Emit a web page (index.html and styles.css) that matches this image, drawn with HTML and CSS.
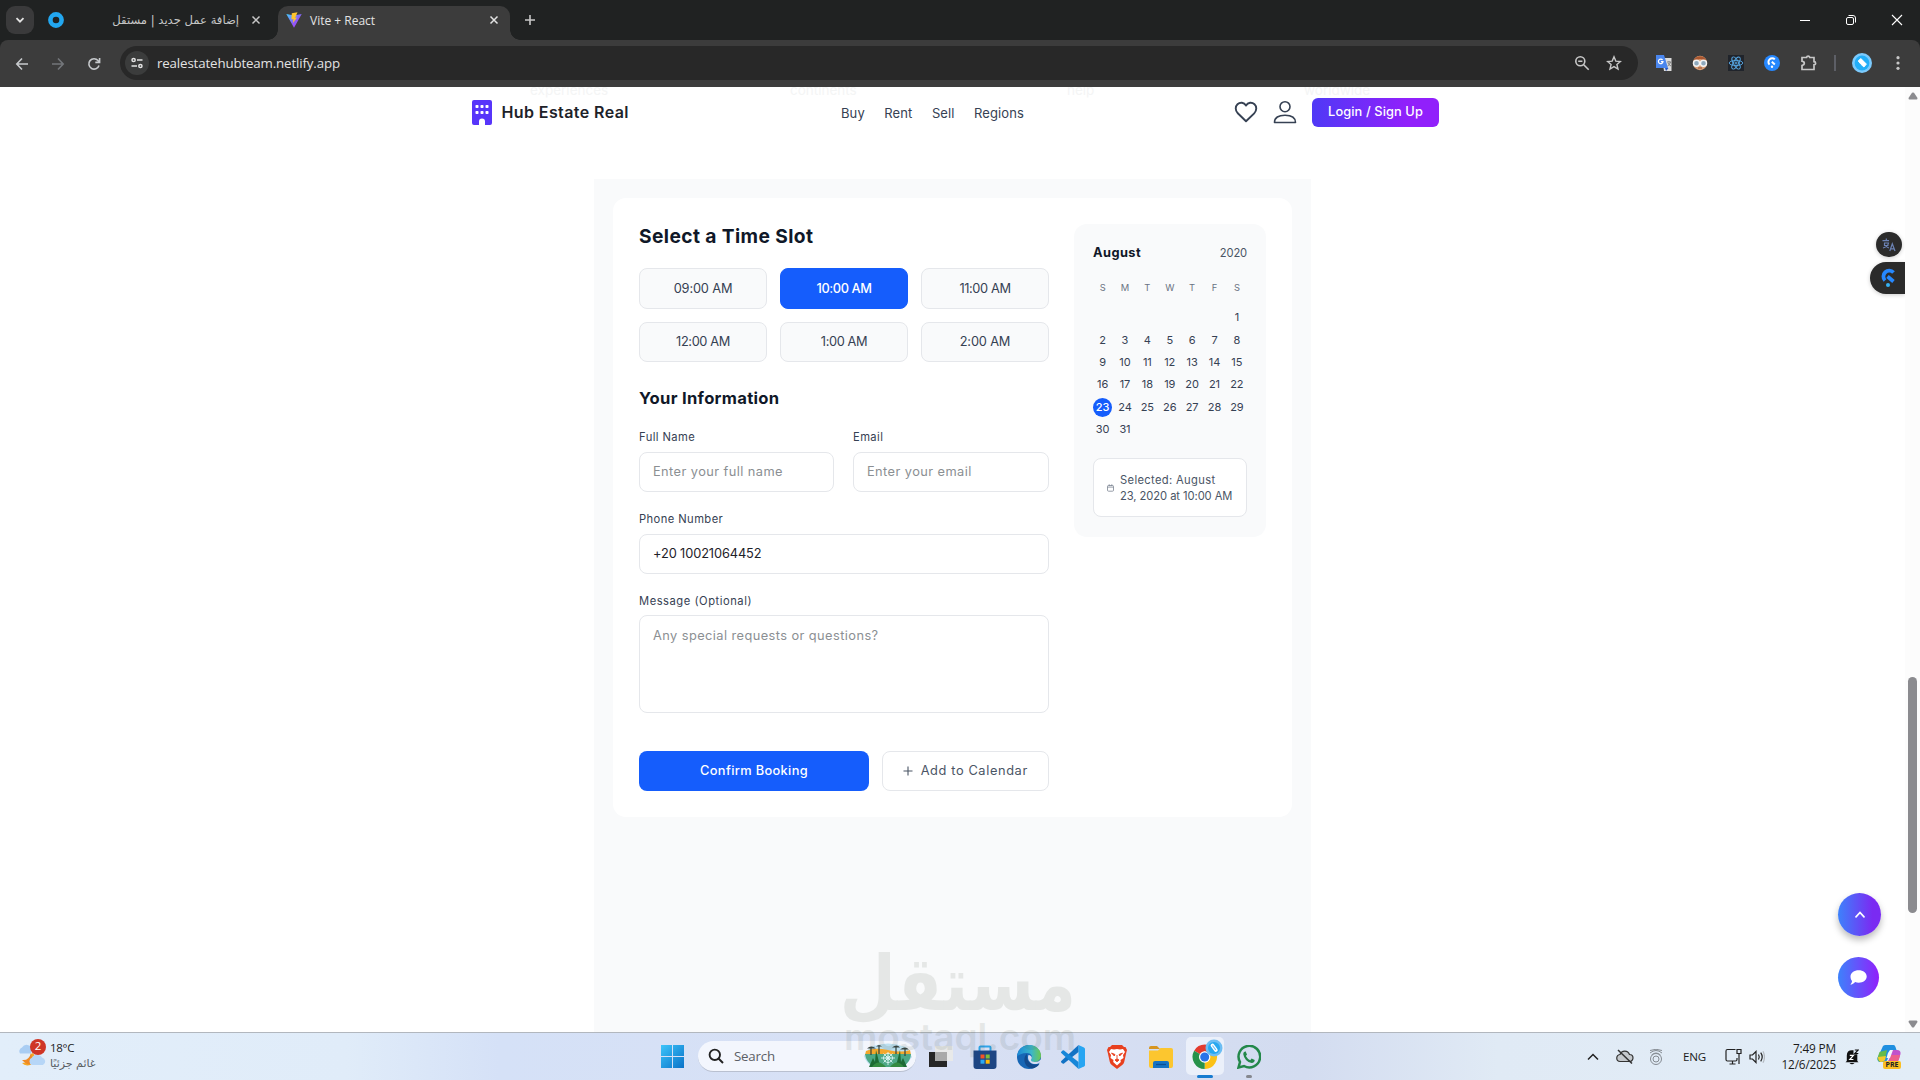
FILE: index.html
```html
<!DOCTYPE html>
<html lang="en">
<head>
<meta charset="utf-8">
<title>Vite + React</title>
<link rel="stylesheet" href="styles.css">
</head>
<body>
<div class="tabs">
  <div class="tab-menu"><svg width="10" height="10" viewBox="0 0 10 10" fill="none" stroke="#e3e3e3" stroke-width="1.8"><path d="M1.500 3.200 5 6.700l3.500-3.500"/></svg></div>
  <div class="tab idle">
    <svg width="16" height="16" viewBox="0 0 16 16" fill="none"><circle cx="8" cy="8" r="5.600" stroke="#22a7f0" stroke-width="4.600"/></svg>
    <span class="tab-title ar" dir="rtl">إضافة عمل جديد | مستقل</span>
    <svg class="x" width="10" height="10" viewBox="0 0 10 10" stroke="#c7c7c7" stroke-width="1.500"><path d="M1.500 1.500l7 7m0-7-7 7"/></svg>
  </div>
  <div class="tab active">
    <svg width="16" height="16" viewBox="0 0 16 16"><defs><linearGradient id="v" x2="1" y2="1"><stop stop-color="#41d1ff"/><stop offset=".55" stop-color="#8b5cf6"/><stop offset="1" stop-color="#bd34fe"/></linearGradient></defs><path d="M.3 2 8 3.400 15.700 2 8 15.700z" fill="url(#v)"/><path d="M11.500.2 5.800 1.300 5.400 7.500l2-.4-.5 3.800 4.200-5.300-2 .3z" fill="#ffc52b"/></svg>
    <span class="tab-title">Vite + React</span>
    <svg class="x" width="10" height="10" viewBox="0 0 10 10" stroke="#e3e3e3" stroke-width="1.500"><path d="M1.500 1.500l7 7m0-7-7 7"/></svg>
  </div>
  <svg class="new-tab" width="12" height="12" viewBox="0 0 12 12" stroke="#c7c7c7" stroke-width="1.600"><path d="M6 1v10M1 6h10"/></svg>
  <div class="win">
    <svg width="12" height="12" viewBox="0 0 12 12" stroke="#fff"><path d="M1 6.500h10"/></svg>
    <svg width="12" height="12" viewBox="0 0 12 12" fill="none" stroke="#fff"><rect x="1.500" y="3.500" width="7" height="7" rx="1.500"/><path d="M3.500 1.500h4.500a2.500 2.500 0 0 1 2.500 2.500v4.500"/></svg>
    <svg width="12" height="12" viewBox="0 0 12 12" stroke="#fff" stroke-width="1.100"><path d="M1 1l10 10M11 1 1 11"/></svg>
  </div>
</div>

<div class="toolbar">
  <div class="nav-btns">
    <svg width="14" height="14" viewBox="0 0 14 14" fill="none" stroke="#c7cacd" stroke-width="1.600"><path d="M13 7H2m5-5.500L1.800 7 7 12.500"/></svg>
    <svg width="14" height="14" viewBox="0 0 14 14" fill="none" stroke="#73767a" stroke-width="1.600"><path d="M1 7h11M7 1.500 12.200 7 7 12.500"/></svg>
    <svg width="14" height="14" viewBox="0 0 14 14" fill="none" stroke="#c7cacd" stroke-width="1.600"><path d="M12 8.500A5.200 5.200 0 1 1 11 3.500l1.200 1.300M12.600 1v4.400H8.300"/></svg>
  </div>
  <div class="omnibox">
    <div class="site"><svg width="12" height="12" viewBox="0 0 12 12" fill="none" stroke="#e3e3e3" stroke-width="1.500"><circle cx="2.600" cy="3" r="1.600"/><path d="M6 3h5.500M.5 9H6"/><circle cx="9.400" cy="9" r="1.600"/></svg></div>
    <span class="url">realestatehubteam.netlify.app</span>
    <svg width="16" height="16" viewBox="0 0 16 16" fill="none" stroke="#c7c7c7" stroke-width="1.600"><circle cx="6.300" cy="6.300" r="4.500"/><path d="M9.700 9.700l5 5M4.200 6.300h4.200"/></svg>
    <svg width="16" height="16" viewBox="0 0 16 16" fill="none" stroke="#c7c7c7" stroke-width="1.400"><path d="M8 1.800l1.800 4.300 4.600.4-3.500 3 1.100 4.500L8 11.600 4 14l1.100-4.500-3.500-3 4.600-.4z"/></svg>
  </div>
  <div class="exts">
    <svg width="16" height="16" viewBox="0 0 16 16"><path d="M6 3h9.500v13H8z" fill="#dcdcdc"/><path d="M0 0h8l4 13H0z" fill="#4a86ee"/><path d="M9 13h3.500L10 16z" fill="#2557c4"/><path d="M6.600 5A2.300 2.300 0 1 0 7 6.700H4.900" fill="none" stroke="#fff" stroke-width="1.200"/><path d="M11 7h4m-2-1v1m1.500 0q-.7 3-3 4m.5-3q.8 2 3 3" fill="none" stroke="#777" stroke-width=".9"/></svg>
    <svg width="16" height="16" viewBox="0 0 16 16"><circle cx="8" cy="8" r="7.200" fill="#dca078"/><path d="M1.500 6A6.800 6.800 0 0 1 14.500 6L8 4z" fill="#a9562f"/><circle cx="4.500" cy="8.300" r="3" fill="#8fa9bd" stroke="#f4f4f4" stroke-width="1.400"/><circle cx="11.500" cy="8.300" r="3" fill="#8fa9bd" stroke="#f4f4f4" stroke-width="1.400"/><path d="M6 13h4" stroke="#8b4c32"/></svg>
    <svg width="16" height="16" viewBox="0 0 16 16" fill="none" stroke="#58a9e6" stroke-width=".9"><path d="M0 0h16v16H0z" fill="#20242b" stroke="none"/><ellipse cx="8" cy="8" rx="6.800" ry="2.600"/><ellipse cx="8" cy="8" rx="6.800" ry="2.600" transform="rotate(60 8 8)"/><ellipse cx="8" cy="8" rx="6.800" ry="2.600" transform="rotate(120 8 8)"/><circle cx="8" cy="8" r="1"/></svg>
    <svg width="16" height="16" viewBox="0 0 16 16" fill="none"><circle cx="8" cy="8" r="8" fill="#2688ff"/><path d="M10.800 4.400A3.700 3.700 0 1 0 5.500 9.600M7.800 6.800l3 2.700" stroke="#fff" stroke-width="2"/><circle cx="8" cy="11.800" r="1.200" fill="#fff"/></svg>
    <svg width="18" height="18" viewBox="0 0 18 18" fill="none" stroke="#c7c7c7" stroke-width="1.700"><path d="M2 3.500h4.500a1.700 1.700 0 0 1 3.300 0H14v4.200a1.600 1.600 0 0 1 0 3.200v4.600H2v-4q2.300-.5 2.300-2.200T2 7.200z"/></svg>
    <i class="sep"></i>
    <svg width="20" height="20" viewBox="0 0 20 20"><circle cx="10" cy="10" r="10" fill="#7ccafc"/><circle cx="10" cy="10" r="7.400" fill="#22aef8"/><path d="M6.300 8l2.500-2.500 2.600 2.600 3 3-2.500 2.900-3-2.800z" fill="#fff" stroke="#fff" stroke-linejoin="round"/></svg>
    <svg width="4" height="16" viewBox="0 0 4 16" fill="#c7c7c7"><circle cx="2" cy="2.700" r="1.600"/><circle cx="2" cy="8" r="1.600"/><circle cx="2" cy="13.300" r="1.600"/></svg>
  </div>
</div>

<div class="viewport">
  <div class="page">
    <header class="header">
      <div class="ghost" aria-hidden="true"><span class="g1">experiences</span><span class="g2">continents</span><span class="g3">help</span><span class="g4">worldwide</span></div>
      <div class="brand">
        <svg width="20" height="25" viewBox="0 0 20 25"><path d="M2 0h16a2 2 0 0 1 2 2v21a2 2 0 0 1-2 2h-5v-3.500a3 3 0 0 0-6 0V25H2a2 2 0 0 1-2-2V2a2 2 0 0 1 2-2z" fill="#5735fa"/><g fill="#fff"><rect x="3.500" y="5" width="3" height="3" rx=".8"/><rect x="8.500" y="5" width="3" height="3" rx=".8"/><rect x="13.500" y="5" width="3" height="3" rx=".8"/><rect x="3.500" y="11" width="3" height="3" rx=".8"/><rect x="8.500" y="11" width="3" height="3" rx=".8"/><rect x="13.500" y="11" width="3" height="3" rx=".8"/></g></svg>
        <span>Hub Estate Real</span>
      </div>
      <nav class="links"><a>Buy</a><a>Rent</a><a>Sell</a><a>Regions</a></nav>
      <div class="account">
        <svg width="24" height="22" viewBox="0 0 24 22" fill="none" stroke="#364153" stroke-width="1.900" stroke-linejoin="round"><path d="M12 20.300 3.800 12.300C1 9.500 1.200 5.500 3.500 3.300 6 1 10 1.200 12 4.600 14 1.200 18 1 20.500 3.300c2.300 2.200 2.500 6.200-.3 9z"/></svg>
        <svg width="24" height="24" viewBox="0 0 24 24" fill="none" stroke="#364153" stroke-width="1.600" stroke-linejoin="round"><circle cx="12" cy="6.700" r="5"/><path d="M1.500 22.500C1.500 17.500 5.500 15.200 12 15.200s10.500 2.300 10.500 7.300z"/></svg>
        <button class="login">Login / Sign Up</button>
      </div>
    </header>

    <section class="booking">
      <div class="card">
        <div class="form">
          <h2>Select a Time Slot</h2>
          <div class="slots">
            <button>09:00 AM</button><button class="on">10:00 AM</button><button class="one">11:00 AM</button>
            <button class="one">12:00 AM</button><button class="one">1:00 AM</button><button>2:00 AM</button>
          </div>
          <h3>Your Information</h3>
          <div class="row">
            <div class="field"><label>Full Name</label><div class="input">Enter your full name</div></div>
            <div class="field"><label>Email</label><div class="input">Enter your email</div></div>
          </div>
          <div class="field"><label>Phone Number</label><div class="input filled">+20 10021064452</div></div>
          <div class="field"><label class="wide">Message (Optional)</label><div class="input area">Any special requests or questions?</div></div>
          <div class="actions">
            <button class="confirm">Confirm Booking</button>
            <button class="add"><svg width="10" height="10" viewBox="0 0 10 10" stroke="#4a5565" stroke-width="1.100"><path d="M5 .5v9M.5 5h9"/></svg>Add to Calendar</button>
          </div>
        </div>
        <aside class="calendar">
          <div class="month"><b>August</b><span>2020</span></div>
          <div class="grid week"><span>S</span><span>M</span><span>T</span><span>W</span><span>T</span><span>F</span><span>S</span></div>
          <div class="grid days">
            <span class="first">1</span>
            <span>2</span><span>3</span><span>4</span><span>5</span><span>6</span><span>7</span><span>8</span>
            <span>9</span><span>10</span><span>11</span><span>12</span><span>13</span><span>14</span><span>15</span>
            <span>16</span><span>17</span><span>18</span><span>19</span><span>20</span><span>21</span><span>22</span>
            <span class="today">23</span><span>24</span><span>25</span><span>26</span><span>27</span><span>28</span><span>29</span>
            <span>30</span><span>31</span>
          </div>
          <div class="selected">
            <svg width="7" height="8" viewBox="0 0 7 8" fill="none" stroke="#7b8492" stroke-width=".8"><rect x=".5" y="1.500" width="6" height="5.700" rx="1"/><path d="M.5 3.100h6M2.200.3v1.500M4.800.3v1.500"/></svg>
            <p><span class="l1">Selected: August</span><br><span class="l2">23, 2020 at 10:00 AM</span></p>
          </div>
        </aside>
      </div>
    </section>

    <div class="side-tools">
      <div class="translate"><svg width="14" height="14" viewBox="0 0 14 14" fill="none" stroke="#6c83b5" stroke-width="1.200"><path d="M.5 2.700h6.500M4.300.5v2.200M2 5h4.500q-.5 3.500-5.500 5M2.500 5v2.500h4M3.500 7.500Q5 9.500 7 10M7.800 13l2.500-7.300L13 13M8.600 10.800h3.700"/></svg></div>
      <div class="assist"><svg width="16" height="20" viewBox="0 0 16 20" fill="none" stroke="#2688ff" stroke-width="3.800"><path d="M13.500 4.500A5.500 5.500 0 1 0 5 12.500"/><path d="M7.500 8.500l6 5"/><circle cx="8" cy="17" r="2" fill="#35b1f5" stroke="none"/></svg></div>
    </div>
    <div class="fabs">
      <div class="fab up"><svg width="10" height="7" viewBox="0 0 10 7" fill="none" stroke="#fff" stroke-width="1.700" stroke-linecap="round"><path d="M1 5.800 5 1.500l4 4.300"/></svg></div>
      <div class="fab chat"><svg width="17" height="15" viewBox="0 0 17 15" fill="#fff"><path d="M8.700.3c4.500 0 8 2.700 8 6.200s-3.500 6.200-8 6.200c-1.300 0-2.500-.2-3.600-.7C4 13.500 2.200 14.600.3 14.600c1-1 1.600-2.200 1.700-3.600C1 9.700.5 8.200.5 6.500.5 3 4.200.3 8.700.3z"/></svg></div>
    </div>
  </div>
  <div class="scrollbar">
    <svg width="10" height="8" viewBox="0 0 10 8" fill="#8b8b8f"><path d="M4 .8Q5 0 6 .8L9.500 6Q9.500 7.500 8.500 7.500h-7Q.5 7.500.5 6z"/></svg>
    <i></i>
    <svg width="10" height="8" viewBox="0 0 10 8" fill="#8b8b8f"><path d="M4 7.200Q5 8 6 7.200L9.500 2Q9.500.5 8.500.5h-7Q.5.5.5 2z"/></svg>
  </div>
</div>

<div class="taskbar">
  <div class="weather">
    <svg width="28" height="30" viewBox="0 0 28 30"><path d="M2 14.500a4 4 0 0 1 2-6 5.500 5.500 0 0 1 10 1.500l-1 4.500z" fill="#a9cdf3"/><path d="M15 14a7 7 0 1 1-11 10q7 0 9-9z" fill="#f4a825"/><path d="M4 21q7 1 9-7l2 9q-3 6-11-2z" fill="#f08a24"/><path d="M14 26a4 4 0 0 1 0-7.500 6 6 0 0 1 10 0 4 4 0 0 1 1 7.500z" fill="#b6d6f7"/><circle cx="20" cy="8" r="8" fill="#cf3526"/></svg>
    <span class="badge">2</span>
    <div class="forecast"><span>18°C</span><span class="cond" dir="rtl">غائم جزئيًا</span></div>
  </div>
  <svg class="start" width="23" height="23" viewBox="0 0 23 23"><defs><linearGradient id="w" x2="1" y2="1"><stop stop-color="#3cc4fa"/><stop offset="1" stop-color="#0a72c8"/></linearGradient></defs><path d="M0 0h11v11H0zM12 0h11v11H12zM0 12h11v11H0zM12 12h11v11H12z" fill="url(#w)"/></svg>
  <div class="search">
    <svg width="16" height="16" viewBox="0 0 16 16" fill="none" stroke="#222" stroke-width="1.900"><circle cx="6.800" cy="6.800" r="5.200"/><path d="M10.500 10.500l4.500 4.500"/></svg>
    <span>Search</span>
    <svg width="48" height="26" viewBox="0 0 48 26"><path d="M6 4q18-7 36 0l6 10q-6 8-10 10H9Q2 20 0 13z" fill="#bcdff0"/><path d="M2 8q8-4 22-1t22 0l1 5H1z" fill="#f4a82d"/><path d="M1 11h46q0 7-8 13H10Q2 19 1 11z" fill="#4da886"/><path d="M5 24 9 15l2 4 1-12 3 12 3 5zM43 24l-4-9-2 4-1-12-3 12-3 5z" fill="#1d6b35"/><path d="M8 24q6-9 14 0zM26 24q7-9 14 0z" fill="#348b42"/><path d="M3 5.500q4-4 9 0zM12 3.500q3-3 6 0zM28 4.500q5-4 8 0zM36 6.500q5-4 9 0z" fill="#3d4644"/><path d="M7 4v8M41 5v8M15 3v8M32 3v8" stroke="#33413c" stroke-width="1.200"/><g stroke="#e7fbff" stroke-width=".8" fill="none"><path d="M24 9v13M17 15h14M19.500 10.500l9 9M28.500 10.500l-9 9"/><circle cx="24" cy="15" r="4.500"/><circle cx="24" cy="15" r="2"/></g></svg>
  </div>
  <div class="apps">
    <div><svg width="24" height="24" viewBox="0 0 24 24"><path d="M0 7h18v15H0z" fill="#262626"/><path d="M6 1h18v15H6z" fill="#e9e9e7" opacity=".92"/><path d="M6 7h12v9H6z" fill="#a9a9a9"/></svg></div>
    <div><svg width="24" height="24" viewBox="0 0 24 24"><path d="M6.500 6V2.500q0-1 1-1h9q1 0 1 1V6" fill="none" stroke="#2da4ea" stroke-width="2"/><path d="M.5 5.500h23V21q0 3-3 3h-17q-3 0-3-3z" fill="#1d4583"/><path d="M7.500 9.500h4v4h-4z" fill="#f35325"/><path d="M12.700 9.500h4v4h-4z" fill="#81bc36"/><path d="M7.500 14.700h4v4h-4z" fill="#2aa9f3"/><path d="M12.700 14.700h4v4h-4z" fill="#ffba08"/></svg></div>
    <div><svg width="24" height="24" viewBox="0 0 24 24"><defs><linearGradient id="e" x2="1"><stop stop-color="#1b87d6"/><stop offset=".6" stop-color="#3cb6c9"/><stop offset="1" stop-color="#6cc94f"/></linearGradient></defs><circle cx="12" cy="12" r="12" fill="#1766b5"/><path d="M0 11.500C.5 5 5.500 0 12 0c7 0 12 5 12 10.500 0 4-3 6.500-6.500 6.500-3 0-4.500-1.200-3-3 1.700-3-1-6-4.500-6-5 0-8.500 2-10 3.500z" fill="url(#e)"/><path d="M10 9c-4 2-4 13 5 14.500 3-.3 6-2 7.500-4.800-3 1.500-7 1.500-10-1.200-2.300-2-3-5.500-2.500-8.500z" fill="#134a8c"/><path d="M11.500 10c-1.500 3.500.5 8 5.500 9 2 .3 4.500-.4 6-1.500L24.500 19V14q-4 4-8 2.800c-2.500-.5-3-1.500-2-2.800 1-1.700-.5-4-3-4z" fill="#d7def2"/></svg></div>
    <div><svg width="24" height="24" viewBox="0 0 24 24"><path d="M17.500 0 23 2.500q1 .5 1 1.500v16q0 1-1 1.500L17.500 24z" fill="#27a5f2"/><path d="M17.500 0v7L3 18.500q-.7.500-1.400 0L.3 17.300q-.6-.7 0-1.400z" fill="#1272c4"/><path d="M17.500 24v-7L3 5.500q-.7-.5-1.400 0L.3 6.700q-.6.700 0 1.400z" fill="#1787d9"/></svg></div>
    <div><svg width="20" height="24" viewBox="0 0 20 24"><path d="M5 0h10l2 2h1.500L20 5l-.8 3-2 9q-.5 2-2 3L10 24l-5.200-4q-1.500-1-2-3l-2-9L0 5l1.500-3H3z" fill="#e8401f"/><path d="M4 4l3 .5L10 4l3 .5 3-.5 2 3-2 3 .5 3-3 2 .3 2L10 20.500 6.200 17l.3-2-3-2L4 10 2 7z" fill="#fff"/><path d="M4.500 8 8 9.500 7.300 11zM15.500 8 12 9.500l.7 1.500zM10 10v3.500M8 15l2-1.300L12 15l-2 1.800z" fill="#e8401f" stroke="#e8401f" stroke-width=".9"/></svg></div>
    <div><svg width="24" height="22" viewBox="0 0 24 22"><path d="M0 2q0-2 2-2h6l3 3H0z" fill="#d79520"/><path d="M0 4.500h9L11.500 2H22q2 0 2 2v16q0 2-2 2H2q-2 0-2-2z" fill="#fcc62f"/><path d="M4 22v-5q0-2 2-2h12q2 0 2 2v5z" fill="#1673c2"/><path d="M7 18.500h10" stroke="#0d4f93" stroke-width="1.300"/></svg></div>
    <div class="current"><svg width="32" height="32" viewBox="0 0 32 32"><g fill="none" stroke-width="7"><path d="M6.200 13.500A8.700 8.700 0 0 1 21.300 13.500" stroke="#e33b2e"/><path d="M21.500 14A8.500 8.500 0 0 1 13.700 26.500" stroke="#fbc116"/><path d="M13.700 26.500A8.700 8.700 0 0 1 6.200 13.500" stroke="#27924a"/></g><circle cx="13.700" cy="18" r="5.700" fill="#fff"/><circle cx="13.700" cy="18" r="4.500" fill="#2a73e8"/><circle cx="23" cy="9" r="8.500" fill="#6cbdf3"/><circle cx="23" cy="9" r="6" fill="#27a8f0"/><path d="M21.500 6.500l3.300 4.500" stroke="#fff" stroke-width="3.800" stroke-linecap="round"/><path d="M21.500 6.500l3.300 4.500" stroke="#6cbdf3" stroke-width="1.200"/></svg></div>
    <div class="running"><svg width="24" height="24" viewBox="0 0 24 24"><path d="M1.500 22.500 3 17A10.800 10.800 0 1 1 7 21z" fill="none" stroke="#23884a" stroke-width="2.500"/><path d="M8.500 6.200 10 9.500 8.900 11q1.600 3 4.300 4.200l1.400-1.700 3.100 1.500q0 2.700-3 3Q7.500 16.500 6.200 9q0-2.300 2.300-2.800z" fill="#23884a"/></svg></div>
  </div>
  <div class="tray">
    <svg width="12" height="8" viewBox="0 0 12 8" fill="none" stroke="#222" stroke-width="1.500"><path d="M1 6.500 6 1.500l5 5"/></svg>
    <svg class="cloud" width="18" height="15" viewBox="0 0 18 15" fill="none" stroke="#333" stroke-width="1.200"><path d="M4.500 12.500a3.500 3.500 0 0 1-.5-7 5 5 0 0 1 9.500 0 3.500 3.500 0 0 1 0 7z" fill="#c4c8cc"/><path d="M2 1l14 13.500" stroke-width="1.500"/></svg>
    <svg class="rings" width="14" height="16" viewBox="0 0 14 16" fill="none" stroke="#858b92" stroke-width="1"><circle cx="7" cy="10" r="5.500"/><circle cx="7" cy="10" r="3"/><path d="M1 4q6-5 12 0M2.500 6q4.500-4 9 0M1 1.500q6-2.500 12 0"/></svg>
    <span class="lang">ENG</span>
    <svg class="net" width="17" height="17" viewBox="0 0 17 17" fill="none" stroke="#222" stroke-width="1.200"><path d="M10.500 1.500H2.500q-1.500 0-1.500 1.500v8.500q0 1.500 1.500 1.500h8q1.500 0 1.500-1.500V10M7.500 13v3M4.500 16h6M12 1.500h4v4h-4zM14 5.500V16"/></svg>
    <svg class="vol" width="16" height="14" viewBox="0 0 16 14" fill="none" stroke="#222" stroke-width="1.200"><path d="M1 5v4h2.500L7 12.500v-11L3.500 5zM9.500 4.500q1.500 2.500 0 5M11.700 2.700q3 4.300 0 8.600"/><path d="M14 1.200q3 5.800 0 11.600" stroke="#b4bac0"/></svg>
    <div class="clock"><span>7:49 PM</span><span>12/6/2025</span></div>
    <div class="bell"><svg width="14" height="16" viewBox="0 0 14 16"><path d="M1.800 12V6.500Q1.800 1.200 7 1.200h1.500v4h3.800V12l1.200 1.200H.5z" fill="#111"/><path d="M4.500 14h5q-2.500 2.500-5 0z" fill="#111"/><path d="M4.800 6.300h3.600L4.800 10.500h3.600" fill="none" stroke="#fff" stroke-width="1.200"/><path d="M9.800 1h3.400L9.800 4.500h3.500" fill="none" stroke="#111" stroke-width="1.100"/></svg></div>
    <div class="copilot"><svg width="24" height="18" viewBox="0 0 24 18"><path d="M6 1q1-1 2.500-1h8q1.500 0 2 2l1 3h-4q-2 0-3 3l-1.500 5q-1 4-4 4H3.500Q0 17 .5 13z" fill="#1f8fe0"/><path d="M2.500 7 10 5l-2 9q-1 3-4 3-3.500 0-3.500-4z" fill="#66bb4b"/><path d="M1 12l8-1-1 4q-1 2-4 2-2.500-.5-3-5z" fill="#f5c92e"/><path d="M15 5h5q4 0 3.500 4L22 14q-.7 3-3.500 3H10q2-1 3-5z" fill="#c052cc"/><path d="M14 10h9l-1 4q-1 3-4 3h-6z" fill="#ec5f8d"/><path d="M13 5h3l-3 8H9.500l1.500-5z" fill="#f3f6fb"/></svg><span>PRE</span></div>
  </div>
</div>
<div class="watermark"><div class="wm-ar" dir="rtl">مستقل</div><div class="wm-en">mostaql.com</div></div>
</body>
</html>
```
FILE: styles.css
```css
* { box-sizing: border-box; }
html, body { margin: 0; height: 1080px; overflow: hidden; }
body { position: relative; display: flex; flex-direction: column; background: #202222; font-family: Inter, "Noto Sans", sans-serif; }
svg { flex: none; display: block; }
h2, h3, p { margin: 0; }
button { font: inherit; padding: 0; border: 0; }

/* Browser chrome */
.tabs, .toolbar, .taskbar { font-family: "Open Sans", "DejaVu Sans", sans-serif; }
.tabs { height: 40px; display: flex; align-items: center; background: #202222; }
.tab-menu { width: 28px; height: 28px; margin-left: 6px; border-radius: 9px; background: #3a3a3b; display: grid; place-items: center; }
.tab { display: flex; align-items: center; }
.tab.idle { width: 244px; padding: 0 17px 0 14px; }
.tab-title { font-size: 12px; color: #e3e3e3; white-space: nowrap; }
.tab-title.ar { font: 11.6px "DejaVu Sans", sans-serif; color: #c7c7c7; margin-left: auto; }
.tab .x { margin-left: auto; }
.tab.idle .x { margin-left: 12px; }
.tab.active { align-self: flex-end; width: 232px; height: 34px; padding: 0 11px 6px 8px; border-radius: 10px 10px 0 0; background: #3c3c3c; position: relative; }
.tab.active::before, .tab.active::after { content: ""; position: absolute; bottom: 0; width: 10px; height: 10px; }
.tab.active::before { left: -10px; background: radial-gradient(circle at 0 0, transparent 9.5px, #3c3c3c 10px); }
.tab.active::after { right: -10px; background: radial-gradient(circle at 100% 0, transparent 9.5px, #3c3c3c 10px); }
.tab.active .tab-title { margin-left: 8px; }
.new-tab { margin-left: 14px; }
.win { margin: 0 17px 0 auto; display: flex; gap: 34px; }
.toolbar { height: 47px; display: flex; align-items: center; background: #3c3c3c; border-radius: 8px 8px 0 0; }
.nav-btns { display: flex; gap: 22px; width: 120px; padding-left: 15px; }
.omnibox { width: 1518px; height: 34px; margin-top: -1px; border-radius: 17px; background: #282828; display: flex; align-items: center; gap: 16px; padding: 0 16px 0 5px; }
.site { width: 24px; height: 24px; border-radius: 12px; background: #3b3c3c; display: grid; place-items: center; margin-right: -8px; }
.url { flex: 1; font-size: 13.3px; letter-spacing: -.14px; color: #e3e3e3; }
.exts { display: flex; align-items: center; gap: 20px; padding-left: 18px; margin-top: -1px; }
.exts svg:nth-child(5) { margin-right: -3px; }
.sep { width: 2px; height: 16px; background: #5d5f66; margin-left: -1px; }
.sep + svg { margin-left: -4px; }
.exts svg:last-child { margin-left: 4px; }

/* Page */
.viewport { height: 945px; display: flex; background: #fff; }
.page { flex: 1; position: relative; overflow: hidden; display: flex; flex-direction: column; align-items: center; }
.header { position: relative; width: 967px; height: 51px; margin-left: 6px; flex: none; display: flex; align-items: center; color: #364153; }
.ghost { position: absolute; inset: 0; overflow: hidden; color: #f4f5f5; font-size: 13.500px; line-height: 14px; }
.ghost span { position: absolute; top: -4px; }
.g1 { left: 58px; } .g2 { left: 318px; } .g3 { left: 595px; } .g4 { left: 832px; }
.brand { width: 369px; display: flex; align-items: center; gap: 9.500px; font-weight: 600; font-size: 16px; letter-spacing: .4px; color: #1e2229; }
.brand span { margin-top: -2px; }
.links { display: flex; gap: 19.500px; font-size: 13px; letter-spacing: .1px; color: #364153; }
.account { margin-left: auto; display: flex; align-items: center; gap: 15px; }
.account svg { margin-top: -1px; }
.login { width: 127px; height: 29px; border-radius: 6px; background: linear-gradient(90deg, #4f39f6, #9120fb 75%); color: #fff; font-size: 12.8px; font-weight: 500; letter-spacing: .11px; padding-bottom: 2px; }

.booking { flex: none; width: 717px; height: 870px; margin-top: 41px; padding: 19px; background: #f9fafb; }
.card { height: 619px; padding: 26px; border-radius: 13px; background: #fff; display: flex; gap: 25px; }
.form { width: 410px; display: flex; flex-direction: column; }
h2 { height: 25px; margin-bottom: 19px; font: 700 19.2px/25px Inter, sans-serif; letter-spacing: .4px; color: #101828; }
.slots { display: grid; grid-template-columns: repeat(3, 1fr); grid-template-rows: 41px 40px; gap: 13px; font-size: 12.8px; }
.slots button { border: 1px solid #e5e7eb; border-radius: 8px; background: #f9fafb; color: #364153; letter-spacing: -.15px; padding-bottom: 1px; }
.slots .one { letter-spacing: -.38px; }
.slots .on { border-color: #155dfc; background: #155dfc; color: #fff; font-weight: 500; letter-spacing: -.39px; }
h3 { margin: 25px 0 19px; font: 700 16.6px/23px Inter, sans-serif; letter-spacing: .3px; color: #101828; }
.row { display: grid; grid-template-columns: 195px 196px; gap: 19px; }
.field { margin-bottom: 19px; }
label { display: block; font-size: 11.2px; line-height: 17px; letter-spacing: .42px; color: #364153; margin-bottom: 6px; }
label.wide { letter-spacing: .53px; margin-bottom: 5px; }
.input { height: 40px; border: 1px solid #e5e7eb; border-radius: 8px; padding: 0 13px; font-size: 12.8px; line-height: 38px; letter-spacing: .43px; color: #8b8f93; }
.input.filled { color: #1e2229; letter-spacing: -.1px; }
.input.area { height: 98px; line-height: 39px; }
.actions { display: flex; gap: 13px; margin-top: 19px; font-size: 12.8px; }
.actions button { height: 40px; border-radius: 8px; padding-bottom: 1px; }
.confirm { width: 230px; background: #155dfc; color: #fff; font-weight: 500; letter-spacing: .35px; }
.add { width: 167px; border: 1px solid #e5e7eb; background: #fff; color: #4a5565; display: flex; align-items: center; justify-content: center; gap: 7.500px; letter-spacing: .62px; }
.calendar { width: 192px; height: 313px; border-radius: 13px; background: #f9fafb; padding: 19px; }
.month { height: 19px; display: flex; justify-content: space-between; align-items: center; font-size: 11.2px; letter-spacing: -.15px; color: #4a5565; }
.month b { font-weight: 700; font-size: 12.8px; letter-spacing: .45px; color: #101828; }
.grid { display: grid; grid-template-columns: repeat(7, 19.2px); grid-auto-rows: 19.2px; gap: 3.2px; place-items: center; font-size: 11px; color: #364153; }
.week { margin: 16px 0 11px; font-size: 9.4px; color: #6a7282; }
.first { grid-column: 7; }
.grid span { width: 19.2px; line-height: 19.2px; text-align: center; letter-spacing: -.1px; }
.grid .today { border-radius: 50%; background: #155dfc; color: #fff; font-weight: 500; }
.selected { width: 154px; height: 59px; margin-top: 18.500px; border: 1px solid #e5e7eb; border-radius: 8px; background: #fff; padding: 1px 0 0 13px; display: flex; align-items: center; gap: 6px; font-size: 11.2px; line-height: 16px; color: #4a5565; white-space: nowrap; }
.l1 { letter-spacing: .34px; } .l2 { letter-spacing: -.07px; }

/* Floating controls */
.side-tools { position: absolute; right: 0; top: 145px; display: flex; flex-direction: column; align-items: flex-end; gap: 5px; }
.translate { width: 26px; height: 25px; margin-right: 3px; border-radius: 13px; background: #2b2b2b; display: grid; place-items: center; box-shadow: 0 1px 4px #0003; }
.assist { width: 35px; height: 32px; border-radius: 16px 0 0 16px; background: #2b2b2b; display: grid; place-items: center; box-shadow: 0 1px 4px #0003; }
.fabs { position: absolute; right: 24px; top: 806px; display: flex; flex-direction: column; gap: 21px; }
.fab { width: 43px; height: 43px; border-radius: 50%; display: grid; place-items: center; background: linear-gradient(90deg, #3d82fb, #7a2bf2 80%); }
.up { box-shadow: 0 4px 7px #0004; }
.chat { width: 41px; height: 41px; background: linear-gradient(90deg, #3d82fb, #9120fb); }
.scrollbar { width: 15px; background: #fcfcfc; display: flex; flex-direction: column; align-items: center; padding: 5px 0 4px; }
.scrollbar i { width: 9px; height: 236px; border-radius: 5px; background: #8b8b8f; margin: 577px 0 auto; }

/* Taskbar */
.taskbar { height: 48px; border-top: 1px solid #b2b7be; background: linear-gradient(90deg, #e2eefa 0, #e0ecf9 18%, #d5e1f7 26%, #d8e0f4 50%, #d3dcf0 68%, #e0eaf5 78%, #e2edf7 100%); display: flex; align-items: center; color: #1c1c1c; }
.weather { width: 661px; height: 40px; padding-left: 18px; display: flex; align-items: center; gap: 4px; position: relative; }
.weather > svg { margin-top: -6px; }
.badge { position: absolute; left: 34px; top: 2px; width: 8px; text-align: center; font-size: 11.500px; line-height: 14px; color: #fff; }
.forecast { display: flex; flex-direction: column; font-size: 11.500px; line-height: 16px; letter-spacing: -.3px; margin-top: -2px; }
.forecast .cond { font: 11px/16px "DejaVu Sans", sans-serif; letter-spacing: 0; color: #565b61; }
.start { margin-right: 14px; }
.search { width: 218px; height: 31px; border-radius: 16px; background: #f3f6fd; border-bottom: 1px solid #b9c0d0; display: flex; align-items: center; padding: 0 4px 0 10px; font-size: 13.3px; letter-spacing: -.2px; color: #5c5f66; }
.search span { flex: 1; margin-left: 10px; }
.apps { display: flex; margin-left: 2.500px; }
.apps div { width: 44px; height: 47px; display: grid; place-items: center; position: relative; }
.apps .current::before { content: ""; position: absolute; left: 3px; top: 4px; width: 38px; height: 38px; border-radius: 5px; background: #ebf0fa; }
.apps .current svg { position: relative; top: -2px; left: 2px; }
.apps .current::after, .running::after { content: ""; position: absolute; left: 14px; bottom: 2px; width: 16px; height: 3px; border-radius: 2px; background: #157bd0; }
.apps .running::after { left: 19px; width: 6px; background: #85888f; }
.tray { margin-left: auto; display: flex; align-items: center; padding-right: 19px; }
.cloud { margin-left: 17px; } .rings { margin-left: 15px; }
.lang { width: 23px; margin-left: 20px; font-size: 11.6px; letter-spacing: -.2px; }
.net { margin-left: 19px; } .vol { margin-left: 7px; }
.clock { width: 60px; margin-left: 11px; display: flex; flex-direction: column; align-items: flex-end; font-size: 11.8px; line-height: 16px; letter-spacing: -.15px; margin-top: -2px; }
.bell { margin-left: 9px; }
.copilot { margin-left: 18px; width: 24px; height: 24px; position: relative; }
.copilot span { position: absolute; left: 6px; bottom: 0; width: 18px; height: 8px; border-radius: 2px; background: #fbbf24; color: #222; font-size: 7px; font-weight: 700; line-height: 8px; text-align: center; }

/* Watermark laid over the whole screen */
.watermark { position: absolute; left: 840px; top: 944px; width: 240px; height: 125px; opacity: .1; color: #3c4b37; pointer-events: none; }
.wm-ar { position: absolute; right: 4px; top: 0; font: 700 76px/80px "DejaVu Sans", sans-serif; white-space: nowrap; transform: scaleX(.85); transform-origin: 100% 0; }
.wm-en { position: absolute; left: 4px; top: 70px; font: 600 37px/46px Inter, sans-serif; letter-spacing: -.05px; white-space: nowrap; }
```
